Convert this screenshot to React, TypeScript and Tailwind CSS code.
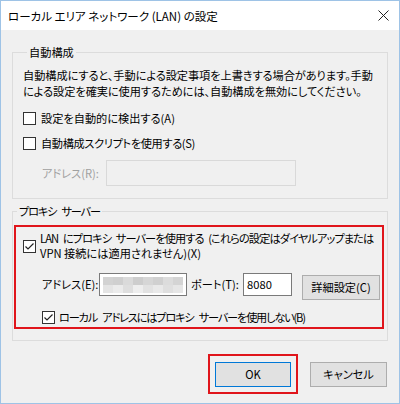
import React from 'react';

const Check: React.FC<{ checked?: boolean }> = ({ checked }) => (
    <span className="w-[13px] h-[13px] border border-[#333] bg-white flex items-center justify-center shrink-0">
        {checked && (
            <svg width="11" height="11" viewBox="0 0 11 11">
                <polyline points="1.5,5.5 4,8 9.5,2.5" fill="none" stroke="#222" strokeWidth="1.2" />
            </svg>
        )}
    </span>
);

const blur = [
    ['bg-[#d2d2d2]', 'bg-[#cfcfcf]', 'bg-[#dadada]', 'bg-[#cdcdcd]', 'bg-[#d6d6d6]', 'bg-[#d0d0d0]', 'bg-[#dcdcdc]', 'bg-[#d4d4d4]'],
    ['bg-[#e4e4e4]', 'bg-[#ebebeb]', 'bg-[#dedede]', 'bg-[#eeeeee]', 'bg-[#e2e2e2]', 'bg-[#e9e9e9]', 'bg-[#dfdfdf]', 'bg-[#e6e6e6]'],
];

export default function App() {
    return (
        <div className="w-[400px] h-[404px] overflow-hidden border border-[#9ec3e6] bg-[#f0f0f0] flex flex-col text-[11.2px] whitespace-nowrap text-black font-['Noto_Sans_CJK_JP',sans-serif] [font-feature-settings:'palt']">
            {/* title bar */}
            <div className="h-[29px] bg-white flex items-center justify-between pl-[7px] pr-[10px] shrink-0">
                <span className="leading-[16px] text-[11.5px]">ローカル エリア ネットワーク (LAN) の設定</span>
                <svg width="11" height="11" viewBox="0 0 11 11">
                    <path d="M0.5 0.5 L10.5 10.5 M10.5 0.5 L0.5 10.5" stroke="#222" strokeWidth="1" />
                </svg>
            </div>

            <div className="px-[11px]">
                <fieldset className="min-w-0 mt-[14px] border border-[#dcdcdc] pl-[10px] pb-[12px]">
                    <legend className="ml-[4px] px-[2px] leading-[16px]">自動構成</legend>
                    <p className="mt-[7px] leading-[16px] tracking-[-0.05px]">
                        自動構成にすると、手動による設定事項を上書きする場合があります。手動<br />
                        による設定を確実に使用するためには、自動構成を無効にしてください。
                    </p>
                    <label className="mt-[11px] flex items-center gap-[5px] leading-[16px]">
                        <Check />
                        <span>設定を自動的に検出する(A)</span>
                    </label>
                    <label className="mt-[9px] flex items-center gap-[5px] leading-[16px]">
                        <Check />
                        <span className="tracking-[-0.35px]">自動構成スクリプトを使用する(S)</span>
                    </label>
                    <div className="mt-[9px] flex items-center">
                        <span className="ml-[19px] w-[64px] text-[#a0a0a0]">アドレス(R):</span>
                        <div className="w-[190px] h-[26px] border border-[#d9d9d9] bg-[#f0f0f0]" />
                    </div>
                </fieldset>

                <fieldset className="min-w-0 mt-[4px] border border-[#dcdcdc] pb-[11px]">
                    <legend className="ml-[4px] px-[2px] leading-[16px] tracking-[-1.2px] [word-spacing:4px]">プロキシ サーバー</legend>
                    <div className="mt-[6px] ml-[1px] mr-[3px] border-2 border-[#e0151b] pl-[7px] pt-[4px] pb-[2px]">
                        <label className="flex items-start gap-[4px] leading-[15px]">
                            <span className="mt-[9px]"><Check checked /></span>
                            <span className="tracking-[-0.9px] [word-spacing:3px]">
                                LAN にプロキシ サーバーを使用する (これらの設定はダイヤルアップまたは<br />
                                <span className="tracking-[0px] [word-spacing:0px]">VPN 接続には適用されません)(X)</span>
                            </span>
                        </label>
                        <div className="mt-[12px] flex items-start">
                            <span className="ml-[19px] w-[57px] leading-[23px]">アドレス(E):</span>
                            <div className="w-[88px] h-[23px] border border-[#7a7a7a] bg-white flex flex-col justify-center px-[3px]">
                                {blur.map((row, i) => (
                                    <div key={i} className="flex h-[8px]">
                                        {row.map((c, j) => (
                                            <div key={j} className={`flex-1 ${c}`} />
                                        ))}
                                    </div>
                                ))}
                            </div>
                            <span className="ml-[4px] w-[52px] leading-[23px]">ポート(T):</span>
                            <div className="w-[49px] h-[23px] border border-[#7a7a7a] bg-white pl-[3px] leading-[20px]">8080</div>
                            <button className="ml-[10px] mt-[2px] w-[78px] h-[25px] border border-[#adadad] bg-[#e1e1e1]">詳細設定(C)</button>
                        </div>
                        <label className="mt-[9px] ml-[19px] flex items-center gap-[4px] leading-[16px]">
                            <Check checked />
                            <span className="tracking-[-1.2px] [word-spacing:4px]">ローカル アドレスにはプロキシ サーバーを使用しない(B)</span>
                        </label>
                    </div>
                </fieldset>

                <div className="mt-[21px] flex justify-end gap-[12px] pr-[1px]">
                    <div className="border-2 border-[#e0151b] px-[5px] pt-[6px] pb-[5px] -mt-[8px]">
                        <button className="w-[76px] h-[25px] border border-[#0078d7] bg-[#e1e1e1]">OK</button>
                    </div>
                    <button className="w-[77px] h-[25px] border border-[#adadad] bg-[#e1e1e1]">キャンセル</button>
                </div>
            </div>
        </div>
    );
}
